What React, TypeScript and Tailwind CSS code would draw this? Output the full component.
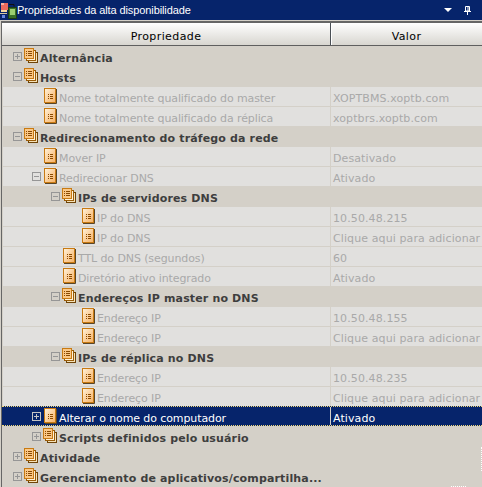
type Row = {
  label: string
  value?: string
  depth: number
  kind: 'group' | 'item'
  toggle?: 'plus' | 'minus'
  selected?: boolean
}

const rows: Row[] = [
  { label: 'Alternância', depth: 0, kind: 'group', toggle: 'plus' },
  { label: 'Hosts', depth: 0, kind: 'group', toggle: 'minus' },
  { label: 'Nome totalmente qualificado do master', value: 'XOPTBMS.xoptb.com', depth: 1, kind: 'item' },
  { label: 'Nome totalmente qualificado da réplica', value: 'xoptbrs.xoptb.com', depth: 1, kind: 'item' },
  { label: 'Redirecionamento do tráfego da rede', depth: 0, kind: 'group', toggle: 'minus' },
  { label: 'Mover IP', value: 'Desativado', depth: 1, kind: 'item' },
  { label: 'Redirecionar DNS', value: 'Ativado', depth: 1, kind: 'item', toggle: 'minus' },
  { label: 'IPs de servidores DNS', depth: 2, kind: 'group', toggle: 'minus' },
  { label: 'IP do DNS', value: '10.50.48.215', depth: 3, kind: 'item' },
  { label: 'IP do DNS', value: 'Clique aqui para adicionar', depth: 3, kind: 'item' },
  { label: 'TTL do DNS (segundos)', value: '60', depth: 2, kind: 'item' },
  { label: 'Diretório ativo integrado', value: 'Ativado', depth: 2, kind: 'item' },
  { label: 'Endereços IP master no DNS', depth: 2, kind: 'group', toggle: 'minus' },
  { label: 'Endereço IP', value: '10.50.48.155', depth: 3, kind: 'item' },
  { label: 'Endereço IP', value: 'Clique aqui para adicionar', depth: 3, kind: 'item' },
  { label: 'IPs de réplica no DNS', depth: 2, kind: 'group', toggle: 'minus' },
  { label: 'Endereço IP', value: '10.50.48.235', depth: 3, kind: 'item' },
  { label: 'Endereço IP', value: 'Clique aqui para adicionar', depth: 3, kind: 'item' },
  { label: 'Alterar o nome do computador', value: 'Ativado', depth: 1, kind: 'item', toggle: 'plus', selected: true },
  { label: 'Scripts definidos pelo usuário', depth: 1, kind: 'group', toggle: 'plus' },
  { label: 'Atividade', depth: 0, kind: 'group', toggle: 'plus' },
  { label: 'Gerenciamento de aplicativos/compartilha...', depth: 0, kind: 'group', toggle: 'plus' },
]

function ToggleBox({ type, selected }: { type: 'plus' | 'minus'; selected?: boolean }) {
  const c = selected ? '#c4c4c4' : '#969696'
  return (
    <svg width="9" height="9" viewBox="0 0 9 9" className="mt-[5px] shrink-0">
      <rect x="0.5" y="0.5" width="8" height="8" fill="none" stroke={c} />
      <path d="M2 4.5h5" stroke={c} />
      {type === 'plus' && <path d="M4.5 2v5" stroke={c} />}
    </svg>
  )
}

function PageIcon() {
  return (
    <svg width="13" height="16" viewBox="0 0 13 16" className="mt-px ml-px shrink-0">
      <defs>
        <linearGradient id="pg" x1="0" y1="0" x2="1" y2="1">
          <stop offset="0" stopColor="#fff3dc" />
          <stop offset="1" stopColor="#f7b062" />
        </linearGradient>
      </defs>
      <rect x="0.5" y="0.5" width="11" height="14" fill="url(#pg)" stroke="#c87a12" />
      <path d="M12.5 1v14.5H1" fill="none" stroke="#5a4526" />
      <path d="M4 6.5h1M6 6.5h3M4 8.5h1M6 8.5h3M4 10.5h1M6 10.5h3" stroke="#8a4a00" />
    </svg>
  )
}

function StackIcon() {
  return (
    <svg width="14" height="15" viewBox="0 0 14 15" className="mt-px shrink-0">
      <rect x="4.5" y="4.5" width="9" height="10" fill="#f6e2b8" stroke="#6e4408" />
      <rect x="2.5" y="2.5" width="9" height="10" fill="#fff2d8" stroke="#9a5c08" />
      <rect x="0.5" y="0.5" width="9" height="10" fill="#fbc886" stroke="#c87a12" />
      <path d="M2 3.5h1M4 3.5h4M2 5.5h1M4 5.5h4M2 7.5h1M4 7.5h4" stroke="#8a4a00" />
    </svg>
  )
}

function TitleIcon() {
  return (
    <svg width="17" height="17" viewBox="0 0 17 17" className="shrink-0">
      <rect x="1" y="1" width="7" height="7" fill="#ec6a5e" />
      <rect x="1" y="1" width="3" height="2" fill="#f8b0a0" />
      <rect x="1" y="8" width="6" height="2" fill="#f4d8a0" />
      <path d="M0 11.5h7" stroke="#d8c8a0" />
      <rect x="2" y="13" width="3" height="3" fill="#6888e0" />
      <path d="M9 2.5h5v2" fill="none" stroke="#101010" />
      <rect x="8.5" y="5.5" width="8" height="11" fill="#3a7028" stroke="#1c3a14" />
      <rect x="10" y="7" width="5" height="6" fill="#9cd070" />
    </svg>
  )
}

function TreeRow({ row }: { row: Row }) {
  const isGroup = row.kind === 'group'
  const indent = [10, 29, 48, 67][row.depth]
  const look = row.selected
    ? '-mt-px mb-px -ml-px bg-[#06246b] text-white border-y border-dotted border-[#f0d878]'
    : isGroup
      ? 'text-[#3e3e3e]'
      : 'bg-[#e1e0de] text-[#a9a9a9] border-b border-[#d4d0c8]'
  const textTop = row.selected ? 'pt-[6px]' : 'pt-[6px]'
  return (
    <div className={`flex h-5 ${look}`}>
      <div className={`flex shrink-0 ${row.selected ? 'w-[328px]' : 'w-[327px]'}`} style={{ paddingLeft: row.selected ? indent + 1 : indent }}>
        <div className="flex w-[11px] shrink-0">
          {row.toggle && <ToggleBox type={row.toggle} selected={row.selected} />}
        </div>
        {isGroup ? <StackIcon /> : <PageIcon />}
        <span className={`ml-[2px] whitespace-nowrap ${textTop} ${isGroup ? 'font-bold tracking-[0.15px]' : 'tracking-[-0.1px]'}`}>{row.label}</span>
      </div>
      {row.value !== undefined && (
        <div className={`flex-1 whitespace-nowrap border-l border-[#d4d0c8] pl-[2px] tracking-[0.1px] ${textTop}`}>
          {row.value}
        </div>
      )}
    </div>
  )
}

export default function App() {
  return (
    <div className="relative h-[487px] w-[482px] overflow-hidden bg-[#d4d0c8] font-['DejaVu_Sans',sans-serif] text-[11px] leading-none">
      <div className="flex h-5 items-center justify-between bg-[#06246b] pr-[11px] text-white">
        <div className="flex items-center">
          <TitleIcon />
          <span className="font-['Liberation_Sans',sans-serif] text-[11px] tracking-[-0.1px]">Propriedades da alta disponibilidade</span>
        </div>
        <div className="flex items-center gap-[12px]">
          <svg width="8" height="4" viewBox="0 0 8 4"><path d="M0 0h8L4 4z" fill="#fff" /></svg>
          <svg width="7" height="9" viewBox="0 0 7 9">
            <path d="M1.5 0.5h4v4.5h-4z" fill="none" stroke="#fff" />
            <path d="M4 1v4M0 5.5h7M3.5 6v3" stroke="#fff" />
          </svg>
        </div>
      </div>
      <div className="mt-px ml-px border-t-2 border-l border-[#666666]">
        <div className="flex h-[23px] border-b border-[#5f5f5f] bg-gradient-to-b from-white to-[#d8d6d0] text-black">
          <div className="flex w-[328px] shrink-0 justify-center pt-[8px] tracking-[0.4px]">Propriedade</div>
          <div className="flex flex-1 justify-center border-l border-[#4a4f55] pt-[8px] tracking-[0.4px] shadow-[inset_1px_0_0_#ffffff]">Valor</div>
        </div>
        <div className="pt-px pl-px">
          {rows.map((row, i) => (
            <TreeRow key={i} row={row} />
          ))}
        </div>
      </div>
      <div className="absolute top-[447px] right-0 h-[24px] border-r border-dotted border-white" />
      <div className="absolute bottom-0 left-[451px] w-[15px] border-b border-dotted border-white" />
    </div>
  )
}
